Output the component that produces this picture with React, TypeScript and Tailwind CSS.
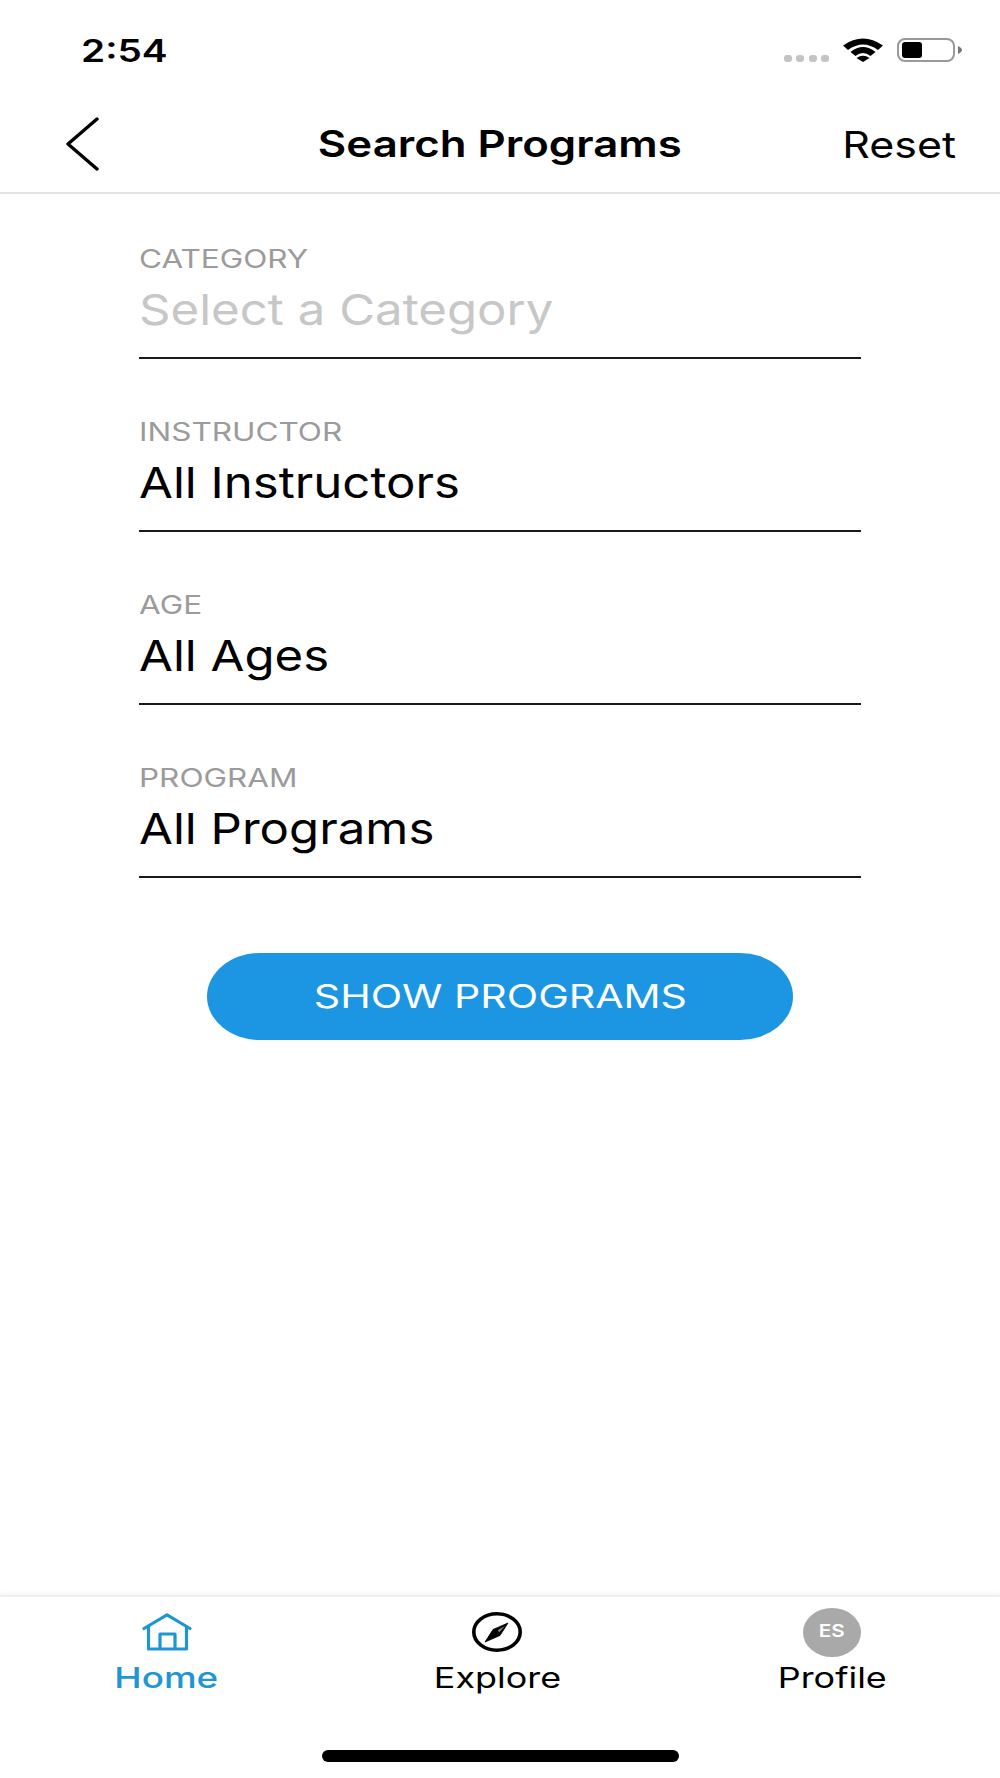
const fields = [
  { label: "CATEGORY", value: "Select a Category", placeholder: true },
  { label: "INSTRUCTOR", value: "All Instructors" },
  { label: "AGE", value: "All Ages" },
  { label: "PROGRAM", value: "All Programs" },
]

function StatusIcons() {
  return (
    <div className="flex items-end">
      <div className="flex gap-[4.3px]">
        {[0, 1, 2, 3].map((i) => (
          <span key={i} className="h-[7px] w-[8px] rounded-[3px] bg-[#c4c4c4]" />
        ))}
      </div>
      <svg viewBox="0 0 40 24" className="ml-[14px] h-[24px] w-[40px]" fill="#000">
        <path d="M0 7.5 Q20 -6.5 40 7.5 L35 12 Q20 1 5 12 Z" />
        <path d="M7.5 14 Q20 4 32.5 14 L27.5 18 Q20 12 12.5 18 Z" />
        <path d="M20 24 L13.5 20 Q20 15.5 26.5 20 Z" />
      </svg>
      <div className="ml-[14px] flex items-center">
        <div className="h-[24px] w-[58px] rounded-[8px] border-2 border-[#999999] px-[3px] py-[2px]">
          <div className="h-full w-[20px] rounded-[3px] bg-black" />
        </div>
        <svg viewBox="0 0 4 8" className="ml-[3px] h-[8px] w-[4px]" fill="#777777">
          <path d="M0 0 Q4 2 4 4 Q4 6 0 8 Z" />
        </svg>
      </div>
    </div>
  )
}

function HomeIcon() {
  return (
    <svg viewBox="0 0 50 38" className="ml-[2px] h-[38px] w-[50px]" fill="none" stroke="#1f96d3" strokeWidth="3.2" strokeLinejoin="round">
      <path d="M2 15.5 L25 1.8 L48 15.5" strokeLinecap="round" />
      <path d="M6.5 13 V36 H44.5 V13" />
      <path d="M18 36 V21 H33 V36" />
    </svg>
  )
}

function CompassIcon() {
  return (
    <svg viewBox="0 0 50 40" className="mr-[2px] h-[40px] w-[50px]">
      <ellipse cx="25" cy="20" rx="23.2" ry="18.2" fill="none" stroke="#000" strokeWidth="3.6" />
      <path d="M36 11 L28 23.5 L13 30 L21 17.5 Z" fill="#000" stroke="#000" strokeWidth="0.8" strokeLinejoin="round" />
      <path d="M33 14 L26 18 L27 20.5 Z" fill="#8a8a8a" />
    </svg>
  )
}

function Tab({ label, labelClass, className, icon }: { label: string; labelClass: string; className?: string; icon: React.ReactNode }) {
  return (
    <div className={`flex flex-1 flex-col items-center ${className ?? ""}`}>
      <div className="flex h-[50px] items-center">{icon}</div>
      <span className={`mt-[4px] origin-center text-[28.5px] leading-[34px] ${labelClass}`}>{label}</span>
    </div>
  )
}

export default function App() {
  return (
    <div className="flex h-[1778px] w-[1000px] flex-col bg-white font-['Inter',sans-serif] text-black">
      <div className="flex h-[100px] shrink-0 items-start justify-between pl-[81px] pr-[38px] pt-[38px]">
        <span className="origin-left scale-x-[1.25] text-[31px] font-semibold leading-[26px]">2:54</span>
        <StatusIcons />
      </div>

      <header className="relative flex h-[94px] shrink-0 items-center justify-center border-b-2 border-[#e3e3e3] pb-[4px]">
        <svg viewBox="0 0 33 54" className="absolute left-[66px] top-[17px] h-[54px] w-[33px]" fill="none" stroke="#000" strokeWidth="3.4" strokeLinecap="round" strokeLinejoin="round">
          <path d="M31 2 L2 27 L31 52" />
        </svg>
        <span className="origin-center scale-x-[1.183] text-[37px] font-semibold leading-[44px]">Search Programs</span>
        <span className="absolute right-[44px] top-[23px] origin-right scale-x-[1.16] text-[37px] leading-[44px]">Reset</span>
      </header>

      <main className="flex flex-1 flex-col items-center pt-[47px]">
        <div className="flex w-[722px] flex-col gap-[55px]">
          {fields.map((f) => (
            <div key={f.label} className="flex h-[118px] flex-col border-b-2 border-[#1a1a1a]">
              <span className="h-[36px] origin-left scale-x-[1.26] text-[25px] leading-[36px] text-[#9b9b9b]">{f.label}</span>
              <span className={`mt-[5px] origin-left scale-x-[1.143] text-[43px] leading-[54px] ${f.placeholder ? "text-[#c7c7c7]" : "text-black"}`}>
                {f.value}
              </span>
            </div>
          ))}
        </div>
        <button className="mt-[75px] flex h-[87px] w-[586px] items-center justify-center rounded-[53px/43.5px] bg-[#1c96e2] text-white">
          <span className="origin-center scale-x-[1.283] text-[32px] leading-[40px]">SHOW PROGRAMS</span>
        </button>
      </main>

      <footer className="flex h-[183px] shrink-0 flex-col border-t-2 border-[#efefef] shadow-[0_-2px_4px_rgba(0,0,0,0.04)]">
        <div className="flex pr-[2px] pt-[10px]">
          <Tab label="Home" labelClass="scale-x-[1.29] font-medium text-[#1f96d3]" icon={<HomeIcon />} />
          <Tab label="Explore" labelClass="scale-x-[1.26] text-black" icon={<CompassIcon />} />
          <Tab
            label="Profile"
            labelClass="scale-x-[1.26] text-black"
            className="pl-[2px]"
            icon={
              <div className="flex h-[49px] w-[58px] items-center justify-center rounded-[50%] bg-[#a9a9a9]">
                <span className="origin-center scale-x-[1.22] text-[17px] font-semibold text-white">ES</span>
              </div>
            }
          />
        </div>
        <div className="mx-auto mt-[55px] h-[12px] w-[357px] rounded-[6px] bg-black" />
      </footer>
    </div>
  )
}
